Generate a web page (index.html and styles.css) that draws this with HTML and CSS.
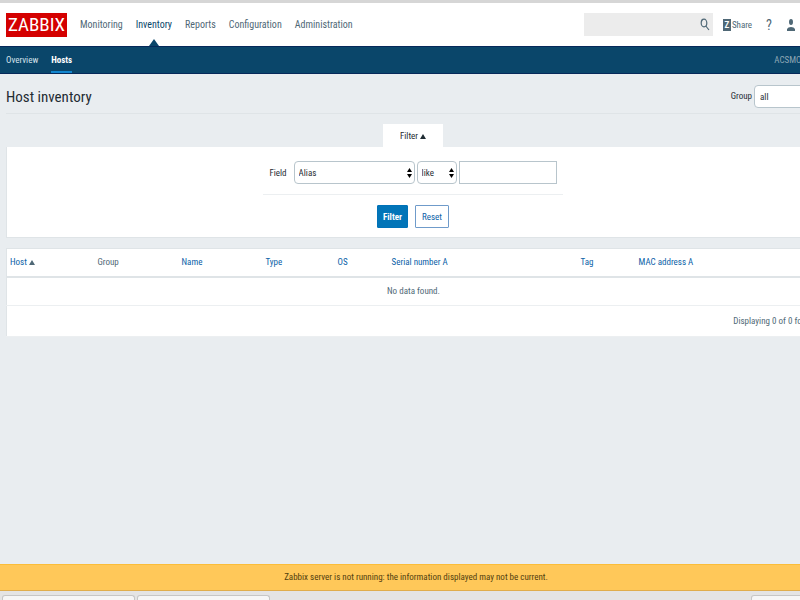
FILE: index.html
```html
<!DOCTYPE html>
<html lang="en">
<head>
    <meta charset="UTF-8">
    <meta name="viewport" content="width=device-width, initial-scale=1.0">
    <title>Host inventory</title>
    <link rel="stylesheet" href="styles.css">
</head>
<body>
    <div class="page">
        <header class="top">
            <a href="#" class="logo">ZABBIX</a>
            <nav class="top-nav">
                <a href="#">Monitoring</a>
                <a href="#" class="selected">Inventory</a>
                <a href="#">Reports</a>
                <a href="#">Configuration</a>
                <a href="#">Administration</a>
            </nav>
            <form class="search">
                <input type="text" aria-label="Search">
                <button type="button" aria-label="Search">
                    <svg width="10" height="14" viewBox="0 0 10 14">
                        <ellipse cx="4" cy="5" rx="2.800" ry="3.800"/>
                        <path d="M5.800 8L9 12"/>
                    </svg>
                </button>
            </form>
            <a href="#" class="share"><span class="share-icon">Z</span>Share</a>
            <a href="#" class="help">?</a>
            <a href="#" class="profile" aria-label="Profile">
                <svg width="8" height="12" viewBox="0 0 8 12">
                    <ellipse cx="4" cy="3" rx="2" ry="3"/>
                    <path d="M0 12V10Q1 8 4 8T8 10V12Z"/>
                </svg>
            </a>
        </header>

        <nav class="sub-nav">
            <a href="#">Overview</a>
            <a href="#" class="selected">Hosts</a>
            <span class="server-name">ACSMON</span>
        </nav>

        <main>
            <div class="title-row">
                <h1>Host inventory</h1>
                <label for="group">Group</label>
                <select id="group" class="group-select">
                    <option>all</option>
                </select>
            </div>

            <div class="filter-tab">
                <button type="button">Filter <span class="arrow-up"></span></button>
            </div>
            <form class="panel filter">
                <div class="filter-fields">
                    <label for="field">Field</label>
                    <span class="select field-select">
                        <select id="field">
                            <option>Alias</option>
                        </select>
                        <svg width="5" height="10" viewBox="0 0 5 10"><path d="M0 4L2.500 0L5 4ZM0 6L2.500 10L5 6Z"/></svg>
                    </span>
                    <span class="select exact-select">
                        <select aria-label="Match">
                            <option>like</option>
                        </select>
                        <svg width="5" height="10" viewBox="0 0 5 10"><path d="M0 4L2.500 0L5 4ZM0 6L2.500 10L5 6Z"/></svg>
                    </span>
                    <input type="text" aria-label="Value">
                </div>
                <div class="filter-buttons">
                    <button type="button" class="btn btn-main">Filter</button>
                    <button type="button" class="btn">Reset</button>
                </div>
            </form>

            <table class="panel list">
                <colgroup>
                    <col class="col-host">
                    <col class="col-group">
                    <col class="col-name">
                    <col class="col-type">
                    <col class="col-os">
                    <col class="col-serial">
                    <col class="col-tag">
                    <col>
                </colgroup>
                <thead>
                    <tr>
                        <th><a href="#">Host</a> <span class="arrow-up"></span></th>
                        <th>Group</th>
                        <th><a href="#">Name</a></th>
                        <th><a href="#">Type</a></th>
                        <th><a href="#">OS</a></th>
                        <th><a href="#">Serial number A</a></th>
                        <th><a href="#">Tag</a></th>
                        <th><a href="#">MAC address A</a></th>
                    </tr>
                </thead>
                <tbody>
                    <tr>
                        <td colspan="8" class="nodata">No data found.</td>
                    </tr>
                    <tr>
                        <td colspan="8" class="paging">Displaying 0 of 0 found</td>
                    </tr>
                </tbody>
            </table>
        </main>

        <div class="warning">Zabbix server is not running: the information displayed may not be current.</div>
        <div class="downloads">
            <span class="download"></span>
            <span class="download"></span>
            <span class="download download-all"></span>
        </div>
    </div>
</body>
</html>
```

FILE: styles.css
```css
:root {
    --text: #1f2c33;
    --gray-text: #4f6876;
    --link: #0b5fa8;
    --navy: #0a466a;
    --border: #dfe4e7;
    --input-border: #b8c5cc;
}

* {
    box-sizing: border-box;
}

body {
    margin: 0;
    overflow: hidden;
    background-color: #e9edf0;
    color: var(--text);
    font-family: "Roboto Condensed", "Liberation Sans", Arial, sans-serif;
    font-size: 9px;
    line-height: 16px;
}

a {
    color: var(--link);
    text-decoration: none;
}

button,
input,
select {
    margin: 0;
    font: inherit;
    color: inherit;
}

/* the page is a little wider than the window */
.page {
    display: flex;
    flex-direction: column;
    width: 104%;
    min-height: 100vh;
}

.top {
    display: flex;
    align-items: center;
    height: 46px;
    padding: 0 37px 0 6px;
    background-color: white;
    border-top: 3px solid #d6d6d6;
}

.logo {
    width: 61px;
    height: 24px;
    background-color: #d40000;
    color: white;
    font-size: 19px;
    line-height: 24px;
    text-align: center;
}

.top-nav {
    display: flex;
    align-self: stretch;
    gap: 13px;
    margin-left: 13px;
    font-size: 10px;
    line-height: 43px;
}

.top-nav a {
    position: relative;
    color: var(--gray-text);
}

.top-nav .selected {
    color: var(--navy);
}

.top-nav .selected::after {
    content: "";
    position: absolute;
    bottom: 0;
    left: 50%;
    margin-left: -5px;
    border: 5px solid transparent;
    border-top: 0;
    border-bottom: 7px solid var(--navy);
}

.search {
    display: flex;
    width: 129px;
    height: 23px;
    margin-left: auto;
    background-color: #ececec;
}

.search input {
    flex: 1;
    min-width: 0;
    border: 0;
    background: none;
}

.search button {
    display: flex;
    align-items: center;
    padding: 0 3px;
    border: 0;
    background: none;
}

.search svg {
    fill: none;
    stroke: var(--gray-text);
    stroke-width: 1.200;
}

.share {
    display: flex;
    align-items: center;
    gap: 1px;
    margin-left: 10px;
    color: var(--gray-text);
}

.share-icon {
    width: 8px;
    height: 12px;
    background-color: var(--gray-text);
    color: white;
    font-weight: bold;
    line-height: 12px;
    text-align: center;
}

.help {
    margin-left: 14px;
    color: var(--gray-text);
    font-size: 14px;
}

.profile {
    display: flex;
    margin-left: 15px;
}

.profile svg {
    fill: var(--gray-text);
}

.sub-nav {
    display: flex;
    gap: 13px;
    height: 28px;
    padding: 0 25px 0 6px;
    background-color: var(--navy);
    border-top: 1px solid #06295a;
    border-bottom: 1px solid #06295a;
    line-height: 26px;
}

.sub-nav a {
    color: #d5e2ea;
}

.sub-nav .selected {
    color: white;
    font-weight: bold;
    border-bottom: 2px solid #1286cf;
}

.server-name {
    margin-left: auto;
    color: #8ea6b5;
}

main {
    flex: 1;
    padding: 0 6px;
}

.title-row {
    display: flex;
    align-items: center;
    height: 40px;
    margin-bottom: 10px;
    border-bottom: 1px solid var(--border);
}

h1 {
    margin: 0 auto 0 0;
    padding-top: 7px;
    font-size: 15px;
    font-weight: normal;
    line-height: 24px;
}

.title-row label {
    padding-top: 5px;
}

.group-select {
    appearance: none;
    width: 72px;
    height: 23px;
    margin: 6px 0 0 2px;
    padding: 0 5px;
    background-color: white;
    border: 1px solid var(--input-border);
    border-radius: 4px;
}

.filter-tab {
    display: flex;
    justify-content: center;
    padding-right: 6px;
}

.filter-tab button {
    width: 60px;
    height: 23px;
    padding: 0;
    border: 0;
    background-color: white;
}

.arrow-up {
    display: inline-block;
    border: 3px solid transparent;
    border-top: 0;
    border-bottom: 5px solid currentColor;
}

.panel {
    background-color: white;
    border: 1px solid var(--border);
}

.filter {
    display: flex;
    flex-direction: column;
    align-items: center;
    height: 91px;
    margin-bottom: 10px;
    padding: 14px 6px 0 0;
    border-top: 0;
}

.filter-fields {
    display: flex;
    align-items: center;
    gap: 2px;
    padding: 0 6px 10px;
    border-bottom: 1px solid #eceff1;
}

.filter-fields label {
    margin-right: 5px;
}

.filter-fields input {
    width: 98px;
    height: 23px;
    border: 1px solid var(--input-border);
}

.select {
    position: relative;
}

.select select {
    appearance: none;
    display: block;
    width: 100%;
    height: 23px;
    padding: 0 4px;
    background-color: white;
    border: 1px solid var(--input-border);
    border-radius: 4px;
}

.select svg {
    position: absolute;
    top: 7px;
    right: 3px;
    pointer-events: none;
}

.field-select {
    width: 121px;
}

.exact-select {
    width: 40px;
}

.filter-buttons {
    display: flex;
    gap: 7px;
    padding-top: 10px;
}

.btn {
    width: 34px;
    height: 23px;
    padding: 0;
    border: 1px solid #6f9bca;
    border-radius: 1px;
    background-color: white;
    color: var(--link);
}

.btn-main {
    width: 31px;
    border-color: #0072b8;
    background-color: #0275b8;
    color: white;
    font-weight: bold;
}

.list {
    width: 100%;
    table-layout: fixed;
    border-collapse: collapse;
    color: var(--gray-text);
}

.list th,
.list td {
    padding: 0 3px;
    text-align: left;
    font-weight: normal;
}

.list th {
    height: 28px;
    border-bottom: 2px solid var(--border);
}

.list td {
    height: 29px;
    border-bottom: 1px solid #eceff1;
}

.list .nodata {
    padding-right: 8px;
    text-align: center;
}

.list .paging {
    height: 31px;
    padding-right: 10px;
    text-align: right;
}

.col-host {
    width: 88px;
}

.col-group,
.col-name {
    width: 84px;
}

.col-type {
    width: 72px;
}

.col-os {
    width: 54px;
}

.col-serial {
    width: 189px;
}

.col-tag {
    width: 58px;
}

.warning {
    height: 27px;
    background-color: #ffc859;
    border-top: 1px solid #fbbd38;
    border-bottom: 1px solid #e0ad4c;
    color: #52400f;
    line-height: 25px;
    text-align: center;
}

.downloads {
    display: flex;
    align-items: flex-end;
    gap: 2px;
    height: 9px;
    padding: 0 2px;
    background-color: #e4e4e4;
}

.download {
    width: 133px;
    height: 5px;
    background-color: #f6f6f6;
    border: 1px solid #c6c6c6;
    border-bottom: 0;
    border-radius: 3px 3px 0 0;
}

.download-all {
    width: 79px;
    margin-left: auto;
}
```
